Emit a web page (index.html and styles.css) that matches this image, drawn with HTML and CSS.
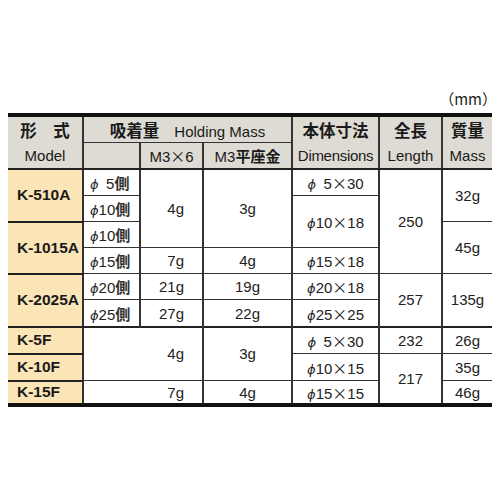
FILE: index.html
```html
<!DOCTYPE html>
<html lang="ja">
<head>
<meta charset="utf-8">
<link rel="stylesheet" href="styles.css">
</head>
<body>
<div class="page">
  <div class="unit">（mm）</div>
  <table class="spec">
    <colgroup>
      <col class="c-model"><col class="c-phi"><col class="c-m36"><col class="c-m3w"><col class="c-dim"><col class="c-len"><col class="c-mass">
    </colgroup>
    <thead>
      <tr class="h1">
        <th class="nb jp">形　式</th>
        <th colspan="3"><span class="jp">吸着量</span>　<span class="lt">Holding Mass</span></th>
        <th class="nb jp">本体寸法</th>
        <th class="nb jp">全長</th>
        <th class="nb jp">質量</th>
      </tr>
      <tr class="h2">
        <th class="nt lt">Model</th>
        <th></th>
        <th class="lt">M3<span class="x">×</span>6</th>
        <th class="lt">M3<span class="jp">平座金</span></th>
        <th class="nt lt dimh">Dimensions</th>
        <th class="nt lt">Length</th>
        <th class="nt lt">Mass</th>
      </tr>
    </thead>
    <tbody>
      <tr>
        <td rowspan="2" class="model">K-510A</td>
        <td class="phi"><span class="p">ϕ</span>&ensp;5<span class="jp">側</span></td>
        <td rowspan="3" class="m36">4g</td>
        <td rowspan="3">3g</td>
        <td><span class="p">ϕ</span>&ensp;5<span class="x">×</span>30</td>
        <td rowspan="4">250</td>
        <td rowspan="2">32g</td>
      </tr>
      <tr>
        <td class="phi"><span class="p">ϕ</span>10<span class="jp">側</span></td>
        <td rowspan="2"><span class="p">ϕ</span>10<span class="x">×</span>18</td>
      </tr>
      <tr>
        <td rowspan="2" class="model">K-1015A</td>
        <td class="phi"><span class="p">ϕ</span>10<span class="jp">側</span></td>
        <td rowspan="2">45g</td>
      </tr>
      <tr>
        <td class="phi"><span class="p">ϕ</span>15<span class="jp">側</span></td>
        <td class="m36">7g</td>
        <td>4g</td>
        <td><span class="p">ϕ</span>15<span class="x">×</span>18</td>
      </tr>
      <tr>
        <td rowspan="2" class="model">K-2025A</td>
        <td class="phi"><span class="p">ϕ</span>20<span class="jp">側</span></td>
        <td>21g</td>
        <td>19g</td>
        <td><span class="p">ϕ</span>20<span class="x">×</span>18</td>
        <td rowspan="2">257</td>
        <td rowspan="2">135g</td>
      </tr>
      <tr>
        <td class="phi"><span class="p">ϕ</span>25<span class="jp">側</span></td>
        <td>27g</td>
        <td>22g</td>
        <td><span class="p">ϕ</span>25<span class="x">×</span>25</td>
      </tr>
      <tr class="grp">
        <td class="model">K-5F</td>
        <td rowspan="2" class="nr"></td>
        <td rowspan="2" class="nl m36">4g</td>
        <td rowspan="2">3g</td>
        <td><span class="p">ϕ</span>&ensp;5<span class="x">×</span>30</td>
        <td>232</td>
        <td>26g</td>
      </tr>
      <tr>
        <td class="model">K-10F</td>
        <td><span class="p">ϕ</span>10<span class="x">×</span>15</td>
        <td rowspan="2">217</td>
        <td>35g</td>
      </tr>
      <tr class="last">
        <td class="model">K-15F</td>
        <td class="nr"></td>
        <td class="nl m36">7g</td>
        <td>4g</td>
        <td><span class="p">ϕ</span>15<span class="x">×</span>15</td>
        <td>46g</td>
      </tr>
    </tbody>
  </table>
</div>
</body>
</html>
```

FILE: styles.css
```css
html, body {
  margin: 0;
  padding: 0;
  background: #fff;
}

.page {
  padding: 89px 8px 0 8px;
  font-family: "Liberation Sans", "Noto Sans CJK JP", sans-serif;
  color: #1a1a1a;
}

.unit {
  text-align: right;
  font-size: 15px;
  line-height: 19px;
  height: 21px;
  margin-right: -5px;
  font-family: "Noto Sans CJK JP", sans-serif;
}

.spec {
  width: 484px;
  table-layout: fixed;
  border-collapse: collapse;
  border-top: 4px solid #111;
  border-bottom: 4px solid #111;
  margin-top: 3px;
}

.c-model { width: 75px; }
.c-phi { width: 57px; }
.c-m36 { width: 63px; }
.c-m3w { width: 89px; }
.c-dim { width: 87px; }
.c-len { width: 63px; }
.c-mass { width: 50px; }

.spec th,
.spec td {
  border: 1px solid #333;
  border-left-width: 2px;
  border-right-width: 2px;
  padding: 0;
  text-align: center;
  white-space: nowrap;
  overflow: hidden;
}

.spec th:first-child,
.spec td.model {
  border-left: none;
}

.spec tr > :last-child {
  border-right: none;
}

.spec th {
  background: #dddbd3;
  font-weight: normal;
  font-size: 15px;
  height: 25px;
  color: #1a1a1a;
}

.spec th.dimh {
  letter-spacing: -0.3px;
}

.spec .h2 th {
  border-bottom: 2px solid #222;
}

.spec th.nb { border-bottom: none; }
.spec th.nt { border-top: none; }

.spec .jp {
  font-family: "Noto Sans CJK JP", sans-serif;
  font-weight: bold;
}

.spec th.jp,
.spec th .jp {
  font-size: 16.5px;
}

.spec .h2 th .jp {
  font-size: 15px;
}

.lt {
  font-family: "Liberation Sans", "Noto Sans CJK JP", sans-serif;
}

.x {
  font-family: "Noto Sans CJK JP", sans-serif;
  font-size: 15px;
}

.p {
  font-family: "DejaVu Sans", sans-serif;
  font-style: italic;
  font-size: 13px;
}

.spec td {
  height: 25.1px;
  font-size: 15px;
  color: #222;
}

.spec tr.last td {
  height: 21px;
}

.spec td.m36 {
  text-align: right;
  padding-right: 18px;
}

.spec td.model {
  background: #fbe4b6;
  text-align: left;
  padding-left: 9px;
  font-weight: bold;
  font-size: 15.5px;
  color: #1a1a1a;
  border-top: 2px solid #222;
  border-bottom: 2px solid #222;
}

.spec td.phi {
  text-align: left;
  padding-left: 6px;
}

.spec td.phi .jp {
  font-weight: bold;
  color: #333;
}

.spec td.nr { border-right: none; }
.spec td.nl { border-left: none; }

.spec tr.grp td {
  border-top: 2px solid #222;
}
```
